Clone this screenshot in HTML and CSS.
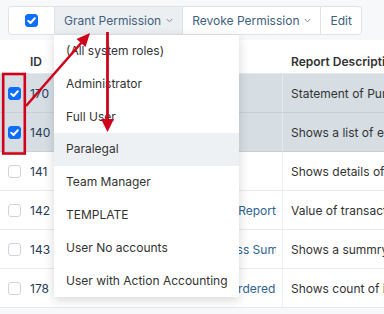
FILE: index.html
```html
<!DOCTYPE html>
<html>
<head>
<meta charset="utf-8">
<link rel="stylesheet" href="styles.css">
</head>
<body>
<div class="page">
  <div class="toolbar">
    <div class="btn-group">
      <div class="btn btn-check"><span class="cb checked"><svg viewBox="0 0 13 13" width="13" height="13"><path d="M3.2 6.8 L5.5 9 L9.8 4.3" fill="none" stroke="#fff" stroke-width="2" stroke-linecap="round" stroke-linejoin="round"/></svg></span></div>
      <div class="dd">
        <div class="btn active">Grant Permission <svg class="chev" viewBox="0 0 7 5" width="7" height="5"><path d="M0.8 1 L3.5 3.8 L6.2 1" fill="none" stroke="#7a8a99" stroke-width="1"/></svg></div>
        <ul class="menu">
          <li>(All system roles)</li>
          <li>Administrator</li>
          <li>Full User</li>
          <li class="hover">Paralegal</li>
          <li>Team Manager</li>
          <li>TEMPLATE</li>
          <li>User No accounts</li>
          <li>User with Action Accounting</li>
        </ul>
      </div>
      <div class="btn">Revoke Permission <svg class="chev" viewBox="0 0 7 5" width="7" height="5"><path d="M0.8 1 L3.5 3.8 L6.2 1" fill="none" stroke="#7a8a99" stroke-width="1"/></svg></div>
      <div class="btn">Edit</div>
    </div>
  </div>

  <div class="grid">
    <div class="row head">
      <div class="c-check"></div>
      <div class="c-id">ID</div>
      <div class="c-name">Report Name</div>
      <div class="c-desc">Report Description</div>
    </div>
    <div class="row sel">
      <div class="c-check"><span class="cb checked"><svg viewBox="0 0 13 13" width="13" height="13"><path d="M3.2 6.8 L5.5 9 L9.8 4.3" fill="none" stroke="#fff" stroke-width="2" stroke-linecap="round" stroke-linejoin="round"/></svg></span></div>
      <div class="c-id">170</div>
      <div class="c-name">Purchases</div>
      <div class="c-desc">Statement of Purchases and Payments</div>
    </div>
    <div class="row sel">
      <div class="c-check"><span class="cb checked"><svg viewBox="0 0 13 13" width="13" height="13"><path d="M3.2 6.8 L5.5 9 L9.8 4.3" fill="none" stroke="#fff" stroke-width="2" stroke-linecap="round" stroke-linejoin="round"/></svg></span></div>
      <div class="c-id">140</div>
      <div class="c-name">Entries List</div>
      <div class="c-desc">Shows a list of entries</div>
    </div>
    <div class="row">
      <div class="c-check"><span class="cb"></span></div>
      <div class="c-id">141</div>
      <div class="c-name">Entry Details</div>
      <div class="c-desc">Shows details of entries</div>
    </div>
    <div class="row">
      <div class="c-check"><span class="cb"></span></div>
      <div class="c-id">142</div>
      <div class="c-name">Monthly Transactions Value Report</div>
      <div class="c-desc">Value of transactions</div>
    </div>
    <div class="row">
      <div class="c-check"><span class="cb"></span></div>
      <div class="c-id">143</div>
      <div class="c-name">Periodic Department Business Summary</div>
      <div class="c-desc">Shows a summry of business</div>
    </div>
    <div class="row">
      <div class="c-check"><span class="cb"></span></div>
      <div class="c-id">178</div>
      <div class="c-name">Outstanding Vendor Items Ordered In Period</div>
      <div class="c-desc">Shows count of items ordered</div>
    </div>
  </div>

  <svg class="annot" width="384" height="314" viewBox="0 0 384 314">
    <rect x="3.2" y="74" width="21.6" height="79.5" fill="none" stroke="#d0021b" stroke-width="2.6"/>
    <line x1="26" y1="106" x2="82" y2="42" stroke="#d0021b" stroke-width="2.6"/>
    <polygon points="90,33 76.5,39 85.5,47" fill="#d0021b"/>
    <line x1="107.5" y1="32" x2="107.5" y2="121" stroke="#d0021b" stroke-width="2.8"/>
    <polygon points="101,119 114,119 107.5,132" fill="#d0021b"/>
  </svg>
</div>
</body>
</html>
```

FILE: styles.css
```css
* { box-sizing: border-box; }
html, body { margin: 0; padding: 0; }
body {
  background: #f7f8f9;
  font-family: Inter, "Noto Sans", sans-serif;
  font-size: 12px;
  color: #333;
  overflow: hidden;
  width: 384px;
  height: 314px;
}
.page { position: relative; width: 384px; height: 314px; overflow: hidden; }

.toolbar { padding: 6px 8px 0; height: 40px; }
.btn-group {
  display: inline-flex;
  height: 29px;
  border: 1px solid #dfe3e7;
  border-radius: 4px;
  background: #fff;
}
.btn {
  display: flex;
  align-items: center;
  gap: 5px;
  height: 100%;
  padding: 0 9px;
  color: #41607e;
  border-left: 1px solid #dfe3e7;
  white-space: nowrap;
}
.btn-check { border-left: 0; width: 45px; justify-content: center; padding: 0; }
.btn.active { background: #eceff2; }
.dd { position: relative; height: 100%; }

.cb {
  display: inline-block;
  width: 13px; height: 13px;
  border: 1px solid #cfd4da;
  border-radius: 3px;
  background: #fff;
  position: relative;
}
.cb.checked { background: #0d6efd; border-color: #0d6efd; }
.cb svg { position: absolute; left: -1px; top: -1px; }

.menu {
  position: absolute;
  left: 0;
  top: calc(100% + 1px);
  width: 185px;
  margin: 0;
  padding: 0;
  list-style: none;
  background: #fff;
  box-shadow: 0 3px 10px rgba(0,0,0,0.16);
  z-index: 5;
}
.menu li {
  height: 32.8px;
  line-height: 32.8px;
  padding: 0 12px;
  color: #333;
  white-space: nowrap;
}
.menu li.hover { background: #eef1f4; }

.grid { background: #fff; width: 620px; }
.row {
  display: grid;
  grid-template-columns: 30px 40px 212px 338px;
  height: 39px;
  align-items: center;
  border-bottom: 1px solid #e9ecef;
}
.row > div { white-space: nowrap; overflow: hidden; height: 100%; display: flex; align-items: center; }
.row.head { height: 34px; align-items: end; border-bottom: 1px solid #e3e7eb; }
.row.head > div { align-items: flex-end; padding-bottom: 4px; font-weight: 600; color: #333; }
.row.sel { background: #d6dee4; border-bottom-color: #c7d0d7; }
.c-check { padding-left: 8px; }
.c-id { color: #243b55; }
.c-name { padding-left: 8px; margin-right: 6px; color: #2f6290; }
.c-desc { padding-left: 8px; border-left: 1px solid #eef0f2; }
.row.sel .c-desc { border-left-color: #e4e9ed; }
.row.head .c-desc { border-left-color: transparent; }
.row.head .c-name { color: #333; }

.annot { position: absolute; left: 0; top: 0; pointer-events: none; z-index: 10; }
```
